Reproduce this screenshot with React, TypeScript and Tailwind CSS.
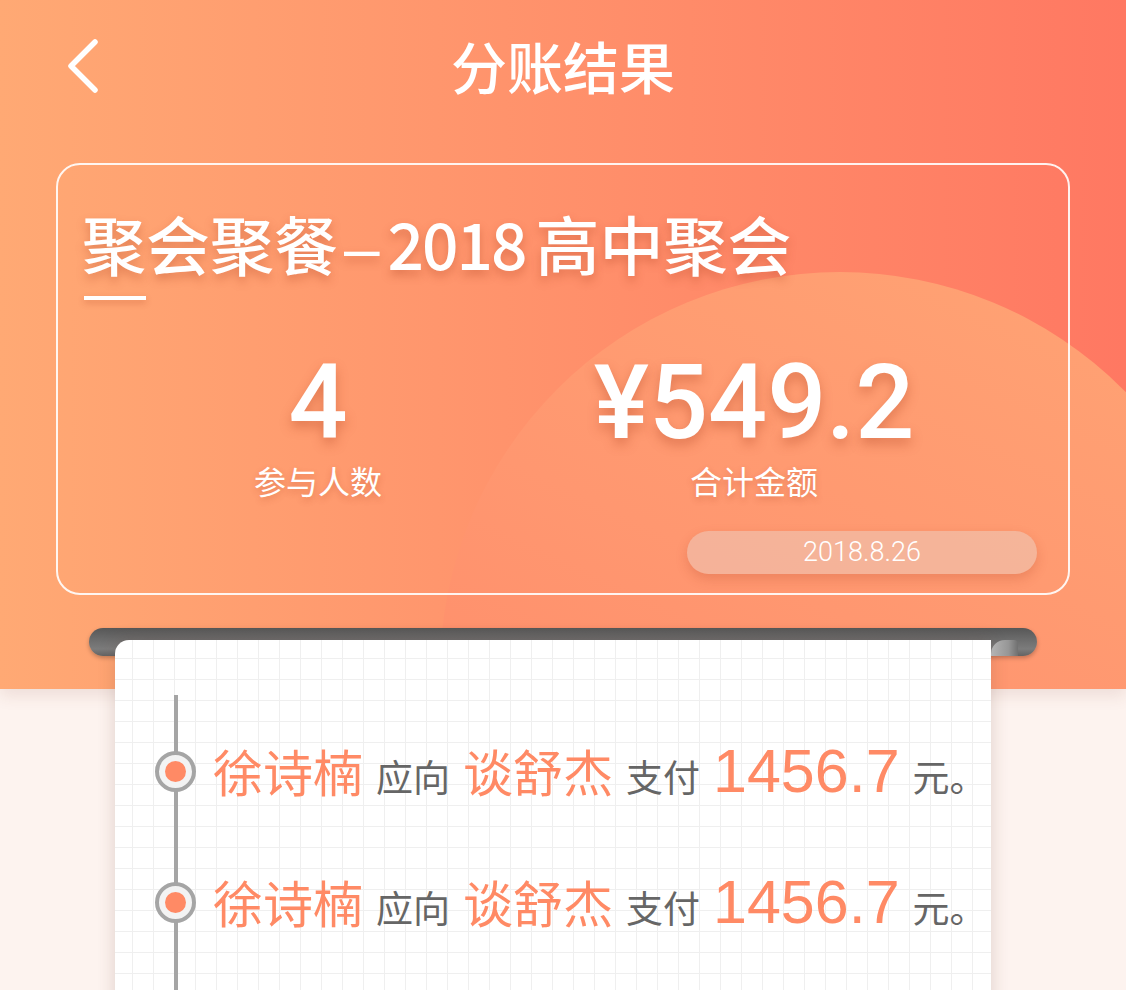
import React from "react";

const rows = [
  { from: "徐诗楠", to: "谈舒杰", amount: "1456.7" },
  { from: "徐诗楠", to: "谈舒杰", amount: "1456.7" },
];

function BackIcon() {
  return (
    <svg width="40" height="56" viewBox="0 0 40 56" fill="none">
      <path d="M29 4 L5 28 L29 52" stroke="#fff" strokeWidth="5.5" strokeLinecap="round" strokeLinejoin="round" />
    </svg>
  );
}

export default function App() {
  return (
    <div className="relative w-[1126px] h-[990px] overflow-hidden bg-[#fdf3ef] font-['Liberation_Sans','Noto_Sans_CJK_SC',sans-serif] [text-spacing-trim:space-all]">
      {/* 顶部渐变 */}
      <div className="relative h-[689px] overflow-hidden bg-[linear-gradient(to_right,#ffa974,#ff7862)] shadow-[0_6px_16px_rgba(120,60,40,0.12)]">
        <div className="absolute left-[440px] top-[272px] w-[800px] h-[800px] rounded-full bg-[linear-gradient(205deg,#ffa474_0%,#ff9770_45%,#ff8566_100%)]" />

        <div className="relative">
          {/* 导航 */}
          <div className="relative h-[130px] flex items-center justify-center">
            <div className="absolute left-[66px] top-[38px]">
              <BackIcon />
            </div>
            <h1 className="text-[56px] leading-none text-white font-medium font-['Noto_Sans_CJK_SC',sans-serif]">分账结果</h1>
          </div>

          {/* 汇总卡片 */}
          <div className="mt-[33px] ml-[56px] w-[1014px] h-[432px] rounded-[24px] border-2 border-white/90 flex flex-col">
            <div className="pt-[45px] pl-[24px]">
              <h2 className="flex items-baseline text-[64px] leading-none font-medium font-['Noto_Sans_CJK_SC',sans-serif] text-white [text-shadow:0_5px_10px_rgba(170,60,30,0.35)]">
                <span>聚会聚餐</span>
                <span className="ml-[6px] font-['Liberation_Sans',sans-serif] font-normal">–</span>
                <span className="ml-[8px] tracking-[-2px]">2018</span>
                <span className="ml-[10px]">高中聚会</span>
              </h2>
              <div className="mt-[16px] ml-[2px] w-[62px] h-[4px] bg-white shadow-[0_3px_6px_rgba(170,60,30,0.3)]" />
            </div>

            <div className="mt-[51px] pl-[42px] grid grid-cols-[436px_436px]">
              <div className="flex flex-col items-center">
                <span className="text-[104px] leading-none font-['Roboto',sans-serif] font-medium text-white [text-shadow:0_6px_12px_rgba(170,60,30,0.35)]">
                  4
                </span>
                <span className="mt-[12px] text-[32px] leading-none text-white [text-shadow:0_3px_6px_rgba(170,60,30,0.3)]">
                  参与人数
                </span>
              </div>
              <div className="flex flex-col items-center">
                <span className="text-[104px] leading-none font-['Roboto',sans-serif] font-medium text-white [text-shadow:0_6px_12px_rgba(170,60,30,0.35)]">
                  ¥549.2
                </span>
                <span className="mt-[12px] text-[32px] leading-none text-white [text-shadow:0_3px_6px_rgba(170,60,30,0.3)]">
                  合计金额
                </span>
              </div>
            </div>

            <div className="mt-[32px] pr-[31px] flex justify-end">
              <div className="w-[350px] h-[43px] rounded-full bg-[#e6dcd7]/40 flex items-center justify-center shadow-[0_5px_12px_rgba(170,60,30,0.22)]">
                <span className="text-[27px] leading-none font-['Roboto',sans-serif] font-light text-white">2018.8.26</span>
              </div>
            </div>
          </div>
        </div>
      </div>

      {/* 打印纸 */}
      <div className="relative z-10 -mt-[61px]">
        <div className="ml-[89px] w-[948px] h-[28px] rounded-full bg-[linear-gradient(to_bottom,#575757,#6e6e6e_45%,#7c7c7c_75%,#636363)] shadow-[0_2px_4px_rgba(0,0,0,0.25)]" />
        <div className="relative -mt-[16px] ml-[115px] w-[876px]">
          <div className="absolute left-[876px] top-0 w-[27px] h-[16px] rounded-tl-[14px] rounded-tr-[4px] bg-[linear-gradient(to_right,#b4b4b4,#969696_65%,#707070)]" />
          <div className="h-[400px] rounded-tl-[14px] bg-white bg-[linear-gradient(to_right,#efefef_1px,transparent_1px),linear-gradient(to_bottom,#efefef_1px,transparent_1px)] bg-[size:21px_21px] bg-[position:17px_18px] shadow-[0_0_18px_rgba(90,50,40,0.18)]">
            <div className="relative ml-[40px] pt-[55px]">
              <div className="absolute left-[19px] top-[55px] w-[4px] h-[400px] bg-[#a5a5a5]" />
              <div className="pt-[11px]">
                {rows.map((r, i) => (
                  <div key={i} className="relative h-[131px] flex items-center">
                    <div className="w-[41px] h-[41px] rounded-full border-4 border-[#a5a5a5] bg-[#f3f3f3] flex items-center justify-center">
                      <div className="w-[21px] h-[21px] rounded-full bg-[#ff8a65]" />
                    </div>
                    <div className="ml-[17px] flex items-baseline gap-[13px] leading-none">
                      <span className="text-[50px] text-[#ff8a65]">{r.from}</span>
                      <span className="text-[37px] text-[#666666]">应向</span>
                      <span className="text-[50px] text-[#ff8a65]">{r.to}</span>
                      <span className="text-[37px] text-[#666666]">支付</span>
                      <span className="text-[61px] text-[#ff8a65]">{r.amount}</span>
                      <span className="text-[37px] text-[#666666]">元。</span>
                    </div>
                  </div>
                ))}
              </div>
            </div>
          </div>
        </div>
      </div>
    </div>
  );
}
